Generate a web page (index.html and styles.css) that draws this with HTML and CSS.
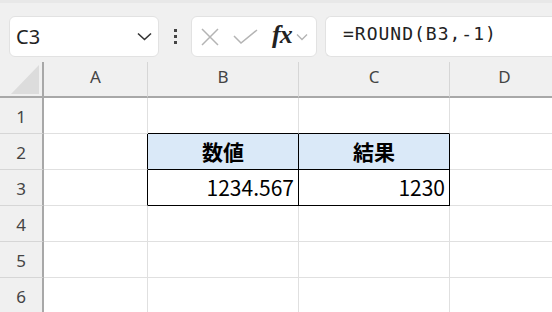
FILE: index.html
```html
<!DOCTYPE html>
<html lang="ja">
<head>
  <meta charset="UTF-8">
  <title>ROUND</title>
  <link rel="stylesheet" href="styles.css">
</head>
<body>
  <div class="toolbar">
    <div class="namebox">
      <span>C3</span>
      <svg class="chev" width="15" height="9" viewBox="0 0 15 9"><path d="M1 1.5 L7.5 7.5 L14 1.5" fill="none" stroke="#333" stroke-width="1.6"/></svg>
    </div>
    <div class="dots"><i></i><i></i><i></i></div>
    <div class="fxbox">
      <svg width="18" height="18" viewBox="0 0 18 18"><path d="M1 1 L17 17 M17 1 L1 17" stroke="#b4b4b4" stroke-width="1.5"/></svg>
      <svg width="25" height="15" viewBox="0 0 25 15"><path d="M1 7 L8 14 L24 1" fill="none" stroke="#b4b4b4" stroke-width="1.5"/></svg>
      <span class="fx">fx</span>
      <svg width="12" height="8" viewBox="0 0 12 8"><path d="M1 1.5 L6 6.5 L11 1.5" fill="none" stroke="#b4b4b4" stroke-width="1.4"/></svg>
    </div>
    <div class="formula">=ROUND(B3,-1)</div>
  </div>

  <div class="sheet">
    <div class="corner"><span class="tri"></span></div>
    <div class="ch">A</div>
    <div class="ch">B</div>
    <div class="ch">C</div>
    <div class="ch">D</div>

    <div class="rh">1</div>
    <div class="c"></div>
    <div class="c tb"></div>
    <div class="c tb"></div>
    <div class="c"></div>

    <div class="rh">2</div>
    <div class="c tr"></div>
    <div class="c t head">数値</div>
    <div class="c t head">結果</div>
    <div class="c"></div>

    <div class="rh">3</div>
    <div class="c tr"></div>
    <div class="c t num">1234.567</div>
    <div class="c t num">1230</div>
    <div class="c"></div>

    <div class="rh">4</div>
    <div class="c"></div>
    <div class="c"></div>
    <div class="c"></div>
    <div class="c"></div>

    <div class="rh">5</div>
    <div class="c"></div>
    <div class="c"></div>
    <div class="c"></div>
    <div class="c"></div>

    <div class="rh">6</div>
    <div class="c"></div>
    <div class="c"></div>
    <div class="c"></div>
    <div class="c"></div>
  </div>
</body>
</html>
```

FILE: styles.css
```css
body {
  margin: 0;
  background: #f0f0f0;
  font-family: "Noto Sans", "Noto Sans CJK JP", sans-serif;
  overflow: hidden;
  border-top: 3px solid #e8e8e8;
}
.toolbar {
  display: flex;
  align-items: center;
  height: 59px;
  padding: 8px 0 0 9px;
  box-sizing: border-box;
}
.toolbar > div {
  height: 41px;
  box-sizing: border-box;
  flex-shrink: 0;
}
.namebox {
  width: 150px;
  background: #fff;
  border: 1px solid #e2e2e2;
  border-radius: 6px;
  display: flex;
  align-items: center;
  justify-content: space-between;
  padding: 0 6px 0 6px;
  font-size: 20px;
  color: #222;
}
.dots {
  width: 32px;
  display: flex;
  flex-direction: column;
  align-items: center;
  justify-content: center;
  gap: 3px;
}
.dots i {
  width: 3px;
  height: 3px;
  background: #444;
}
.fxbox {
  width: 126px;
  background: #fff;
  border: 1px solid #e2e2e2;
  border-radius: 6px;
  display: flex;
  align-items: center;
  padding: 0 0 0 9px;
  gap: 14px;
}
.fxbox svg:last-child {
  margin-left: -10px;
}
.fx {
  font-family: "Liberation Serif", serif;
  font-style: italic;
  font-weight: bold;
  font-size: 26px;
  color: #222;
  letter-spacing: -1px;
  margin-top: -3px;
}
.formula {
  margin-left: 8px;
  width: 240px;
  background: #fff;
  border: 1px solid #e2e2e2;
  border-right: none;
  border-radius: 6px 0 0 6px;
  padding: 6px 0 0 17px;
  font-family: "DejaVu Sans Mono", monospace;
  font-size: 18px;
  letter-spacing: 1px;
  color: #222;
}
.sheet {
  display: grid;
  grid-template-columns: 44px 104px 151px 151px 110px;
  grid-template-rows: 36px repeat(6, 36px);
}
.sheet > div {
  box-sizing: border-box;
}
.corner {
  border-right: 2px solid #a8a8a8;
  border-bottom: 2px solid #a8a8a8;
  display: flex;
  justify-content: flex-end;
  padding: 3px 3px 0 0;
}
.tri {
  width: 0;
  height: 0;
  border-left: 28px solid transparent;
  border-bottom: 29px solid #dcdcdc;
}
.ch {
  border-right: 1px solid #d6d6d6;
  border-bottom: 2px solid #a8a8a8;
  text-align: center;
  font-size: 17px;
  color: #444;
  padding-top: 3px;
}
.rh {
  background: #f0f0f0;
  border-right: 2px solid #a8a8a8;
  border-bottom: 1px solid #d6d6d6;
  text-align: center;
  font-size: 17px;
  color: #444;
  padding-top: 7px;
}
.c {
  background: #fff;
  border-right: 1px solid #e0e0e0;
  border-bottom: 1px solid #e0e0e0;
}
.tb {
  border-bottom-color: #000;
}
.tr {
  border-right-color: #000;
}
.t {
  border-right-color: #000;
  border-bottom-color: #000;
  font-family: "Noto Sans CJK JP", sans-serif;
  font-size: 21px;
  color: #000;
  line-height: 34px;
}
.head {
  background: #dae9f8;
  font-weight: bold;
  text-align: center;
}
.num {
  text-align: right;
  padding-right: 4px;
}
```
